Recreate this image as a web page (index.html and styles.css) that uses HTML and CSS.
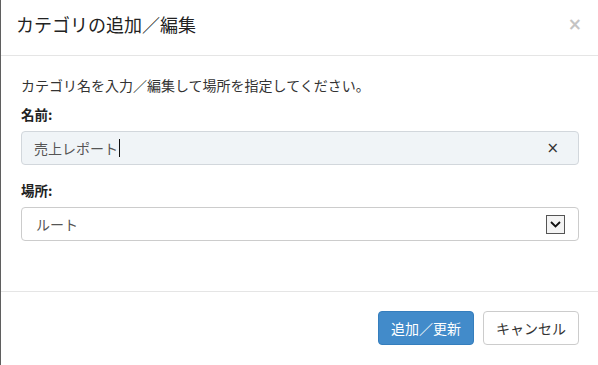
FILE: index.html
```html
<!DOCTYPE html>
<html lang="ja">
<head>
<meta charset="utf-8">
<link rel="stylesheet" href="styles.css">
</head>
<body>
<div class="modal">
  <div class="modal-header">
    <h4 class="modal-title">カテゴリの追加／編集</h4>
    <span class="close">×</span>
  </div>
  <div class="modal-body">
    <p class="intro">カテゴリ名を入力／編集して場所を指定してください。</p>
    <div class="form-group">
      <label class="label">名前:</label>
      <div class="input filled">
        <span class="value">売上レポート</span><span class="caret"></span>
        <span class="clear">×</span>
      </div>
    </div>
    <div class="form-group">
      <label class="label">場所:</label>
      <div class="input select">
        <span class="value">ルート</span>
        <span class="arrow"><svg width="11" height="7" viewBox="0 0 11 7"><path d="M1 1 L5.5 5.5 L10 1" fill="none" stroke="#111" stroke-width="1.8"/></svg></span>
      </div>
    </div>
  </div>
  <div class="modal-footer">
    <button class="btn primary">追加／更新</button>
    <button class="btn default">キャンセル</button>
  </div>
</div>
</body>
</html>
```
FILE: styles.css
```css
* { box-sizing: border-box; }
html, body { margin: 0; padding: 0; }
body {
  width: 598px;
  height: 365px;
  overflow: hidden;
  background: #5f5f5f;
  font-family: "Noto Sans CJK JP", "Noto Sans", sans-serif;
  color: #333;
  font-size: 14px;
}
.modal {
  margin-left: 1px;
  height: 365px;
  background: #fff;
  display: flex;
  flex-direction: column;
}
.modal-header {
  height: 56px;
  padding: 0 15px;
  border-bottom: 1px solid #e5e5e5;
  display: flex;
  align-items: center;
  justify-content: space-between;
}
.modal-title {
  margin: 0;
  font-size: 18px;
  font-weight: normal;
  line-height: 20px;
  color: #222;
  padding-bottom: 7px;
}
.close {
  font-family: "DejaVu Sans", sans-serif;
  font-size: 17px;
  font-weight: bold;
  color: #c4c4c4;
  line-height: 1;
  margin-right: 1px;
  padding-bottom: 6px;
}
.modal-body {
  padding: 19px 19px 0 20px;
  height: 235px;
}
.intro {
  margin: 0 0 9px;
  line-height: 20px;
  font-size: 14px;
}
.form-group { margin-bottom: 15px; }
.form-group + .form-group { margin-top: 3px; }
.label {
  display: block;
  font-weight: bold;
  font-size: 13.5px;
  line-height: 20px;
  margin-bottom: 7px;
  color: #222;
}
.input {
  height: 34px;
  border: 1px solid #ccc;
  border-radius: 4px;
  padding: 0 12px;
  display: flex;
  align-items: center;
  color: #555;
  font-size: 14px;
}
.filled {
  background: #f0f4f7;
  border-color: #d2d7dc;
}
.value { line-height: 20px; }
.caret {
  width: 1px;
  height: 18px;
  background: #111;
  margin-left: 1px;
}
.clear {
  margin-left: auto;
  font-family: "DejaVu Sans", sans-serif;
  font-size: 15px;
  color: #333;
  margin-right: 7px;
}
.select { background: #fff; }
.select .value { padding-left: 2px; }
.arrow {
  margin-left: auto;
  width: 19px;
  height: 19px;
  border: 1px solid #555;
  background: #f4f4f4;
  display: flex;
  align-items: center;
  justify-content: center;
  margin-right: 1px;
}
.modal-footer {
  border-top: 1px solid #e5e5e5;
  padding: 19px 19px 0 0;
  display: flex;
  justify-content: flex-end;
  gap: 9px;
}
.btn {
  font-family: "Noto Sans CJK JP", "Noto Sans", sans-serif;
  font-size: 14px;
  height: 34px;
  width: 96px;
  border-radius: 4px;
  border: 1px solid;
  padding: 0;
  line-height: 20px;
}
.primary {
  background: #428bca;
  border-color: #357ebd;
  color: #fff;
}
.default {
  background: #fff;
  border-color: #ccc;
  color: #333;
}
```
